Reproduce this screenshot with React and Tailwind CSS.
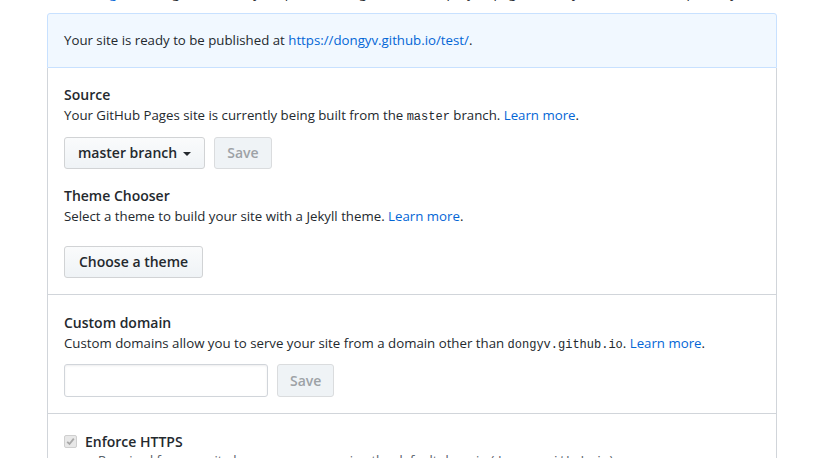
export default function App() {
  const mono = "font-['Liberation_Mono','DejaVu_Sans_Mono',monospace]";
  const btn =
    "h-8 px-[13px] rounded-[3px] border border-[#d1d3d5] bg-gradient-to-b from-[#fafbfc] to-[#eff3f6] text-[14px] font-semibold leading-none text-[#24292e] flex items-center";
  const btnDisabled =
    "h-8 px-[12px] rounded-[3px] border border-[#dadcde] bg-[#eff3f6] text-[14px] font-semibold leading-none text-[#9da2a6] flex items-center";
  return (
    <div className="w-[840px] h-[458px] overflow-hidden bg-white font-['Open_Sans',sans-serif] text-[13.25px] text-[#24292e]">
      <p className="ml-[47px] -mt-[17px] h-[30px] leading-[21px] whitespace-nowrap">
        <span className="text-[#0366d6]">GitHub Pages</span> is designed to host your personal, organization, or project pages directly from a GitHub repository.
      </p>
      <div className="ml-[47px] w-[730px]">
        <div className="h-[55px] flex items-center px-4 bg-[#f1f8ff] border border-[#c8e1ff] rounded-t-[3px]">
          <span className="leading-[21px]">
            Your site is ready to be published at{" "}
            <span className="text-[#0366d6]">https://dongyv.github.io/test/</span>.
          </span>
        </div>
        <div className="border-x border-b border-[#d1d5da] px-4 pt-[16px] pb-4">
          <h3 className="font-semibold text-[14px] leading-[21px]">Source</h3>
          <p className="leading-[21px]">
            Your GitHub Pages site is currently being built from the{" "}
            <span className={`${mono} text-[12px]`}>master</span> branch.{" "}
            <span className="text-[#0366d6]">Learn more</span>.
          </p>
          <div className="flex gap-[9px] mt-[9px]">
            <button className={btn}>
              master branch
              <span className="ml-[6px] mt-[1px] w-0 h-0 border-x-[4px] border-t-[4px] border-x-transparent border-t-[#24292e]" />
            </button>
            <button className={btnDisabled}>Save</button>
          </div>
          <h3 className="font-semibold text-[14px] leading-[21px] mt-[16px]">Theme Chooser</h3>
          <p className="leading-[21px]">
            Select a theme to build your site with a Jekyll theme.{" "}
            <span className="text-[#0366d6]">Learn more</span>.
          </p>
          <div className="flex mt-[19px]">
            <button className={`${btn} px-[14px]`}>Choose a theme</button>
          </div>
        </div>
        <div className="border-x border-b border-[#d1d5da] px-4 pt-[17px] pb-4">
          <h3 className="font-semibold text-[14px] leading-[21px]">Custom domain</h3>
          <p className="leading-[21px]">
            Custom domains allow you to serve your site from a domain other than{" "}
            <span className={`${mono} text-[12px]`}>dongyv.github.io</span>.{" "}
            <span className="text-[#0366d6]">Learn more</span>.
          </p>
          <div className="flex gap-[9px] mt-[8px]">
            <div className="w-[204px] h-[33px] rounded-[3px] border border-[#d1d5da] bg-white shadow-[inset_0_1px_2px_rgba(27,31,35,0.075)]" />
            <button className={`${btnDisabled} h-[33px]`}>Save</button>
          </div>
        </div>
        <div className="border-x border-[#d1d5da] px-4 pt-[17px] pb-4">
          <div className="flex items-center h-[21px]">
            <span className="w-[13px] h-[13px] rounded-[2px] border border-[#cfcfcf] bg-[#e8e8e8] flex items-center justify-center">
              <svg width="9" height="9" viewBox="0 0 9 9">
                <path d="M1.2 4.8 L3.5 7 L7.8 1.6" stroke="#a8a8a8" strokeWidth="1.8" fill="none" />
              </svg>
            </span>
            <span className="ml-[8px] text-[14px] font-semibold">Enforce HTTPS</span>
          </div>
          <p className="ml-[34px] text-[13px] leading-[17px] text-[#586069] whitespace-nowrap">
            Required for your site because you are using the default domain (<span className={`${mono} text-[12px]`}>dongyv.github.io</span>)
          </p>
        </div>
      </div>
    </div>
  );
}
